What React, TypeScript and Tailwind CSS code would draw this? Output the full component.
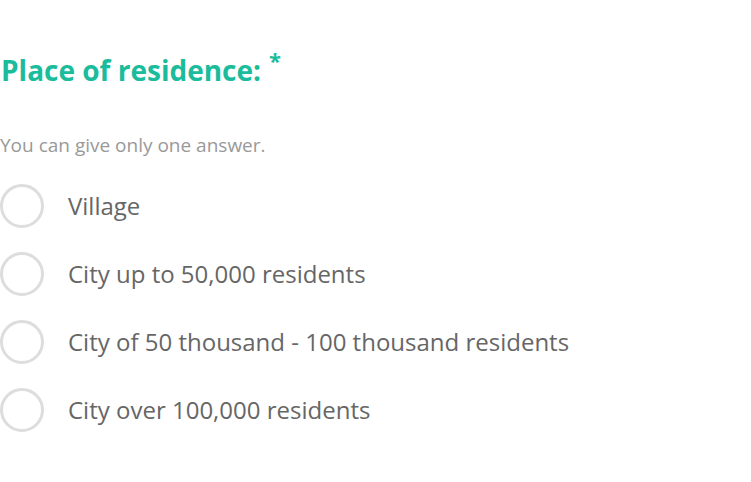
import React from 'react'

const options = [
  'Village',
  'City up to 50,000 residents',
  'City of 50 thousand - 100 thousand residents',
  'City over 100,000 residents',
]

export default function App() {
  return (
    <main className="w-[751px] h-[482px] bg-white overflow-hidden" style={{ fontFamily: '"Open Sans", sans-serif' }}>
      <div className="pt-[51px]">
        <h2 className="text-[28px] font-bold leading-[38px] text-[#1abc9c] pl-[1px]">
          Place of residence:<sup className="text-[22px] ml-[8px] relative top-[-12px]">*</sup>
        </h2>
        <p className="mt-[43px] text-[19px] leading-[26px] text-[#999]">You can give only one answer.</p>
        <ul className="mt-[26px] flex flex-col gap-[24px]">
          {options.map((o) => (
            <li key={o} className="flex items-center gap-[24px]">
              <span className="w-[44px] h-[44px] rounded-full border-[3px] border-[#dddddd] shrink-0" />
              <span className="text-[24px] leading-[32px] text-[#666]">{o}</span>
            </li>
          ))}
        </ul>
      </div>
    </main>
  )
}
